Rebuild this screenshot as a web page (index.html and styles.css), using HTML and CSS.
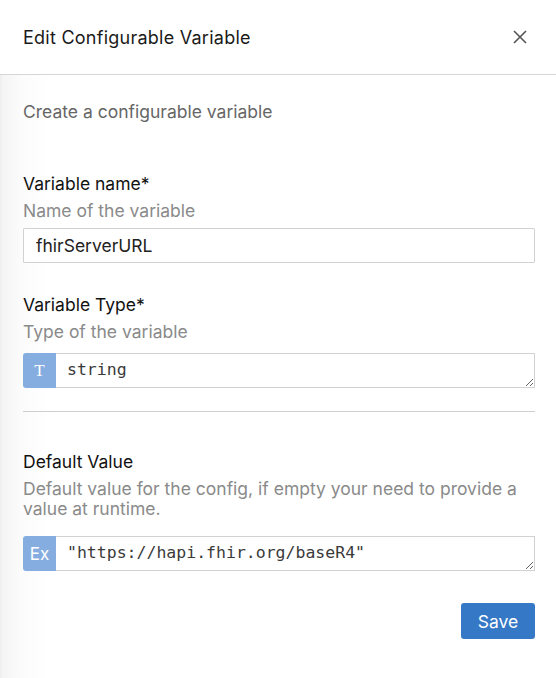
FILE: index.html
```html
<!DOCTYPE html>
<html>
<head>
<meta charset="utf-8">
<link rel="stylesheet" href="styles.css">
</head>
<body>
<div class="drawer">
  <header class="head">
    <h1 class="title">Edit Configurable Variable</h1>
    <button class="close" aria-label="Close">
      <svg width="14" height="14" viewBox="0 0 14 14"><path d="M1 1L13 13M13 1L1 13" stroke="#555" stroke-width="1.6" fill="none"/></svg>
    </button>
  </header>
  <main class="body">
    <p class="intro">Create a configurable variable</p>

    <div class="field">
      <label class="label">Variable name*</label>
      <div class="help">Name of the variable</div>
      <input class="input" type="text" value="fhirServerURL">
    </div>

    <div class="field field-group">
      <label class="label">Variable Type*</label>
      <div class="help">Type of the variable</div>
      <div class="group">
        <span class="addon addon-t">T</span>
        <textarea class="code" rows="1">string</textarea>
      </div>
    </div>

    <hr class="divider">

    <div class="field field-group">
      <label class="label">Default Value</label>
      <div class="help help-multi">Default value for the config, if empty your need to provide a value at runtime.</div>
      <div class="group">
        <span class="addon">Ex</span>
        <textarea class="code" rows="1">"https://hapi.fhir.org/baseR4"</textarea>
      </div>
    </div>

    <div class="actions">
      <button class="save">Save</button>
    </div>
  </main>
</div>
</body>
</html>
```
FILE: styles.css
```css
* { box-sizing: border-box; }
html, body { margin: 0; height: 100%; }
body {
  background: #fff;
  font-family: "Inter", "Liberation Sans", sans-serif;
  color: #1a1a1a;
}
.drawer {
  min-height: 678px;
  background: linear-gradient(to right, #ececec 0, #f4f4f4 2px, #fbfbfb 20px, #fff 50px);
}
.head {
  height: 75px;
  display: flex;
  align-items: center;
  justify-content: space-between;
  padding: 0 29px 0 23px;
  border-bottom: 1px solid #d6d6d6;
  background: #fff;
}
.title {
  margin: 0;
  font-family: "Inter", sans-serif;
  font-weight: 400;
  font-size: 18px;
  letter-spacing: 0.25px;
  color: #1a1a1a;
}
.close {
  border: 0;
  background: none;
  padding: 0;
  display: flex;
  cursor: pointer;
}
.body {
  padding: 26px 21px 0 23px;
}
.intro {
  margin: 0 0 50px;
  font-size: 17.5px;
  line-height: 22px;
  color: #666;
}
.field { margin-bottom: 31px; }
.field-group { margin-bottom: 23px; }
.label {
  display: block;
  font-size: 17.5px;
  line-height: 22px;
  color: #111;
  margin-bottom: 6px;
}
.help {
  font-size: 17.5px;
  line-height: 20px;
  color: #8a8a8a;
  margin-bottom: 7px;
}
.help-multi { margin-bottom: 11px; }
.input {
  display: block;
  width: 100%;
  height: 35px;
  border: 1px solid #d2d2d2;
  border-radius: 1px;
  padding: 0 12px;
  font-family: "Inter", sans-serif;
  font-size: 17.5px;
  color: #222;
  outline: none;
}
.group {
  display: flex;
  height: 35px;
  margin-top: 11px;
}
.help-multi + .group { margin-top: 17px; }
.addon {
  width: 33px;
  flex: none;
  background: #86ade0;
  color: #fff;
  display: flex;
  align-items: center;
  justify-content: center;
  font-size: 17px;
  border-radius: 3px 0 0 3px;
}
.addon-t { font-family: "Liberation Serif", serif; font-size: 17px; }
.code {
  flex: 1;
  height: 35px;
  min-height: 35px;
  border: 1px solid #d2d2d2;
  border-left: 0;
  margin: 0;
  padding: 6px 12px 0 11px;
  font-family: "DejaVu Sans Mono", monospace;
  font-size: 16.5px;
  line-height: 20px;
  color: #3a3a3a;
  resize: vertical;
  outline: none;
  overflow: hidden;
  white-space: pre;
}
.divider {
  border: 0;
  border-top: 1px solid #cfcfcf;
  margin: 0 0 39px;
}
.actions {
  display: flex;
  justify-content: flex-end;
  padding-top: 9px;
}
.save {
  width: 74px;
  height: 36px;
  background: #3578c6;
  color: #fff;
  border: 0;
  border-radius: 3px;
  font-family: "Inter", sans-serif;
  font-size: 17.5px;
}
```
